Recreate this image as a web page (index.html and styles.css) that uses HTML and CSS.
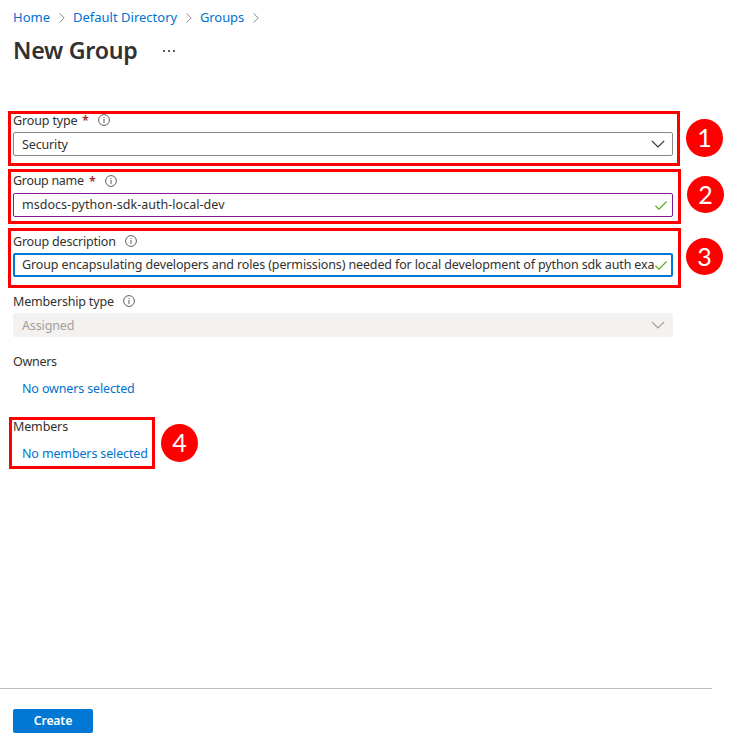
FILE: index.html
```html
<!DOCTYPE html>
<html lang="en">
<head>
<meta charset="utf-8">
<title>New Group</title>
<link rel="stylesheet" href="styles.css">
</head>
<body>
<svg class="defs" aria-hidden="true">
  <symbol id="info" viewBox="0 0 12 12"><circle cx="6" cy="6" r="5.4" fill="none" stroke="#605e5c" stroke-width="1"/><path d="M6 5v4M6 3v1" stroke="#605e5c" stroke-width="1"/></symbol>
  <symbol id="down" viewBox="0 0 14 8"><path d="M.8.8 7 7 13.2.8" fill="none" stroke="currentColor" stroke-width="1.2"/></symbol>
  <symbol id="right" viewBox="0 0 6 10"><path d="M.6.4 5.2 5 .6 9.6" fill="none" stroke="#8a8886" stroke-width="1"/></symbol>
  <symbol id="check" viewBox="0 0 12 9"><path d="M.4 4.8 3.9 8.2 11.6.5" fill="none" stroke="#5fab1f" stroke-width="1.2"/></symbol>
</svg>
<main class="page">
  <nav class="crumbs">
    <a class="c1">Home</a><svg><use href="#right"/></svg><a class="c2">Default Directory</a><svg><use href="#right"/></svg><a class="c3">Groups</a><svg><use href="#right"/></svg>
  </nav>
  <header class="title"><h1>New Group</h1><span class="more"><i></i><i></i><i></i></span></header>
  <form class="form">
    <div class="field">
      <label><span class="l1">Group type</span><b>*</b><svg><use href="#info"/></svg></label>
      <div class="input"><span class="v1">Security</span><svg class="chev"><use href="#down"/></svg></div>
      <div class="mark mark1"></div><div class="badge badge1">1</div>
    </div>
    <div class="field second">
      <label><span class="l2">Group name</span><b>*</b><svg><use href="#info"/></svg></label>
      <div class="input valid"><span class="v2">msdocs-python-sdk-auth-local-dev</span><svg class="tick"><use href="#check"/></svg></div>
      <div class="mark mark2"></div><div class="badge badge2">2</div>
    </div>
    <div class="field">
      <label><span class="l3">Group description</span><svg><use href="#info"/></svg></label>
      <div class="input focus"><span class="v3">Group encapsulating developers and roles (permissions) needed for local development of python sdk auth exa</span><svg class="tick"><use href="#check"/></svg></div>
      <div class="mark mark3"></div><div class="badge badge3">3</div>
    </div>
    <div class="field">
      <label><span class="l4">Membership type</span><svg><use href="#info"/></svg></label>
      <div class="input disabled"><span class="v4">Assigned</span><svg class="chev"><use href="#down"/></svg></div>
    </div>
    <div class="people">
      <div class="name"><span class="l5">Owners</span></div>
      <a class="pick"><span class="v5">No owners selected</span></a>
    </div>
    <div class="people">
      <div class="name"><span class="l6">Members</span></div>
      <a class="pick"><span class="v6">No members selected</span></a>
      <div class="mark mark4"></div><div class="badge badge4">4</div>
    </div>
  </form>
  <footer class="footer"><button class="create">Create</button></footer>
</main>
</body>
</html>
```
FILE: styles.css
```css
* { box-sizing: border-box; }
body { margin: 0; background: #fff; color: #323130; font: 12.5px/18px "Noto Sans", sans-serif; letter-spacing: -.14px; }
.defs { position: absolute; width: 0; height: 0; }
.page { height: 742px; display: flex; flex-direction: column; overflow: hidden; }
span, a { white-space: nowrap; }
a { color: #0072d0; }
.crumbs { display: flex; align-items: center; height: 18px; margin: 8px 0 0 13px; font-size: 13px; letter-spacing: 0; }
.crumbs a { flex: none; }
.crumbs svg { width: 6px; height: 10px; margin: 1px 8px 0 9px; }
.c1 { width: 37px; }
.c2 { width: 104px; }
.c3 { width: 44px; letter-spacing: -.1px; }
.title { display: flex; align-items: center; height: 32px; margin: 8px 0 1px 13px; }
h1 { width: 124px; margin: 0; font-size: 23.2px; line-height: 32px; font-weight: 600; letter-spacing: -.25px; white-space: nowrap; }
.more { display: flex; gap: 3px; margin: 1px 0 0 26px; }
.more i { width: 2px; height: 2px; background: #605e5c; }
.form { width: 660px; margin: 42px 0 0 13px; }
.field, .people { position: relative; }
.field { margin-bottom: 12px; }
.field.second { padding-top: 1px; }
label { display: flex; align-items: center; height: 24px; }
label span { padding-top: 2px; }
.second label span { padding-top: 0; }
.field:first-child label { height: 23px; padding-bottom: 1px; }
label b { width: 6px; margin-left: 4px; padding-top: 2px; color: #a4262c; font-weight: 600; }
label svg { width: 12px; height: 12px; margin-left: 10px; }
.l1 { width: 65px; }
.l2 { width: 72px; letter-spacing: -.3px; }
.l3 { width: 102px; letter-spacing: -.2px; }
.l4 { width: 100px; letter-spacing: -.18px; }
.l5 { letter-spacing: -.3px; }
.input { display: flex; justify-content: space-between; align-items: center; height: 24px; padding: 0 5px 0 8px; border: 1px solid #8a8886; border-radius: 2px; }
.v1, .v4 { padding-top: 2px; }
.valid { border-color: #881798; }
.valid span { margin-top: -1px; letter-spacing: .03px; }
.focus { padding: 0 4px 0 7px; border: 2px solid #0078d4; }
.disabled { background: #f3f2f1; border-color: #f3f2f1; color: #a19f9d; }
.chev { width: 14px; height: 8px; margin-right: 2px; }
.tick { flex: none; width: 12px; height: 9px; }
.v3 { width: 633px; letter-spacing: -.13px; }
.people { height: 65px; padding-top: 4px; }
.name { height: 22px; }
.pick { display: block; margin: 5px 0 0 9px; }
.mark { position: absolute; left: -5px; border: 3px solid #f00; }
.mark1 { top: 2px; width: 672px; height: 55px; }
.mark2 { top: 1px; width: 673px; height: 55px; }
.mark3 { top: -1px; width: 673px; height: 60px; }
.mark4 { left: -4px; top: 3px; width: 146px; height: 52px; }
.badge { position: absolute; left: 673px; width: 37px; height: 37px; border-radius: 50%; background: #f00; color: #fff; font: 25px/36px Lato, sans-serif; letter-spacing: 0; text-align: center; }
.badge1 { top: 10px; height: 38px; }
.badge2 { top: 8px; left: 674px; }
.badge3 { top: 9px; }
.badge4 { top: 10px; left: 148px; height: 38px; }
.footer { width: 712px; margin-top: auto; height: 54px; padding: 20px 13px 0; border-top: 1px solid #bebbb8; }
.create { display: block; width: 80px; height: 24px; padding: 0; border: 0; border-radius: 2px; background: #0078d4; color: #fff; font: 600 12.3px/22px "Noto Sans", sans-serif; letter-spacing: -.2px; }
```
